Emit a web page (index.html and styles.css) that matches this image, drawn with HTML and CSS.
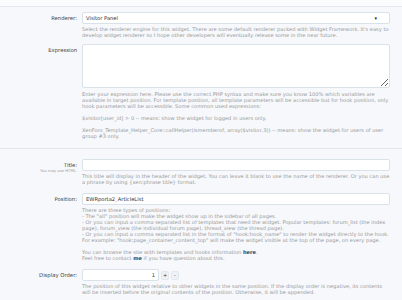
FILE: index.html
```html
<!DOCTYPE html>
<html lang="en">
<head>
    <meta charset="UTF-8"/>
    <title>Widget Options</title>
    <link rel="stylesheet" href="styles.css">
</head>
<body>
    <div class="top-bar"></div>
    <form class="widget-form">
        <div class="section">
            <div class="row">
                <div class="label">Renderer:</div>
                <div class="field">
                    <div class="select">
                        <span>Visitor Panel</span>
                        <span class="caret">&#9662;</span>
                    </div>
                    <p class="explain">Select the renderer engine for this widget. There are some default renderer packed with Widget Framework. It's easy to develop widget renderer so I hope other developers will eventually release some in the near future.</p>
                </div>
            </div>
            <div class="row">
                <div class="label">Expression</div>
                <div class="field">
                    <textarea class="textarea"></textarea>
                    <p class="explain">Enter your expression here. Please use the correct PHP syntax and make sure you know 100% which variables are available in target position. For template position, all template parameters will be accessible but for hook position, only hook parameters will be accessible. Some common used expressions:</p>
                    <p class="explain">$visitor[user_id] &gt; 0 -- means: show the widget for logged in users only.</p>
                    <p class="explain">XenForo_Template_Helper_Core::callHelper(ismemberof, array($visitor,3)) -- means: show the widget for users of user group #3 only.</p>
                </div>
            </div>
        </div>

        <div class="section">
            <div class="row">
                <div class="label">Title:<span class="hint">You may use HTML.</span></div>
                <div class="field">
                    <input type="text" class="text-input">
                    <p class="explain">This title will display in the header of the widget. You can leave it blank to use the name of the renderer. Or you can use a phrase by using {xen:phrase title} format.</p>
                </div>
            </div>
            <div class="row">
                <div class="label">Position:</div>
                <div class="field">
                    <input type="text" class="text-input" value="EWRporta2_ArticleList">
                    <p class="explain">There are three types of positions:<br>
                    - The "all" position will make the widget show up in the sidebar of all pages.<br>
                    - Or you can input a comma separated list of templates that need the widget. Popular templates: forum_list (the index page), forum_view (the individual forum page), thread_view (the thread page).<br>
                    - Or you can input a comma separated list in the format of "hook:hook_name" to render the widget directly to the hook. For example: "hook:page_container_content_top" will make the widget visible at the top of the page, on every page.<br>
                    <br>
                    You can browse the site with templates and hooks information <a href="#">here</a>.<br>
                    Feel free to contact <a href="#">me</a> if you have question about this.</p>
                </div>
            </div>
            <div class="row">
                <div class="label">Display Order:</div>
                <div class="field">
                    <div class="spin">
                        <input type="text" class="text-input number" value="1">
                        <button type="button" class="spin-btn">+</button>
                        <button type="button" class="spin-btn">-</button>
                    </div>
                    <p class="explain">The position of this widget relative to other widgets in the same position. If the display order is negative, its contents will be inserted before the original contents of the position. Otherwise, it will be appended.</p>
                </div>
            </div>
        </div>
    </form>
</body>
</html>
```

FILE: styles.css
```css
* {
    margin: 0;
    padding: 0;
    box-sizing: border-box;
}
body {
    font-family: "DejaVu Sans", Verdana, sans-serif;
    background-color: #f6f8fb;
    color: #444444;
}
.top-bar {
    height: 7px;
    background-color: #fbfcfd;
    border-bottom: 1px solid #e3e8ee;
}
.section {
    padding: 5px 12px 9px 0;
    border-bottom: 1px solid #e1e6ec;
}
.section + .section {
    padding-top: 10px;
}
.row {
    display: grid;
    grid-template-columns: 77px 308px;
    column-gap: 5px;
    margin-bottom: 6px;
}
.section + .section .row {
    margin-bottom: 8px;
}
.row:last-child {
    margin-bottom: 0;
}
.label {
    text-align: right;
    font-size: 5.3px;
    line-height: 6px;
    color: #3f3f3f;
    padding-top: 3px;
}
.hint {
    display: block;
    font-size: 3.8px;
    line-height: 5px;
    color: #a0a0a0;
}
.select,
.text-input,
.textarea {
    display: block;
    width: 100%;
    height: 12px;
    border: 1px solid #d9e1e9;
    border-radius: 2px;
    background-color: #ffffff;
    font-family: inherit;
    font-size: 5.2px;
    color: #333333;
    padding: 0 3px;
    outline: none;
}
.select {
    display: flex;
    align-items: center;
    justify-content: space-between;
    padding-right: 12px;
}
.caret {
    font-size: 5px;
    color: #222222;
}
.textarea {
    height: 44px;
    resize: vertical;
}
.explain {
    font-size: 5.12px;
    line-height: 6px;
    color: #9a9a9a;
    margin-top: 2px;
}
.textarea + .explain {
    margin-top: 3px;
}
.explain + .explain {
    margin-top: 6px;
}
.explain a {
    color: #2b3f5c;
    font-weight: bold;
    text-decoration: none;
}
.spin {
    display: flex;
    align-items: center;
    gap: 2px;
}
.number {
    width: 77px;
    text-align: right;
}
.spin-btn {
    width: 8px;
    height: 9px;
    border: 1px solid #e3e8ee;
    border-radius: 2px;
    background-color: #eef2f6;
    font-family: inherit;
    font-size: 5px;
    line-height: 7px;
    color: #333333;
}
```
